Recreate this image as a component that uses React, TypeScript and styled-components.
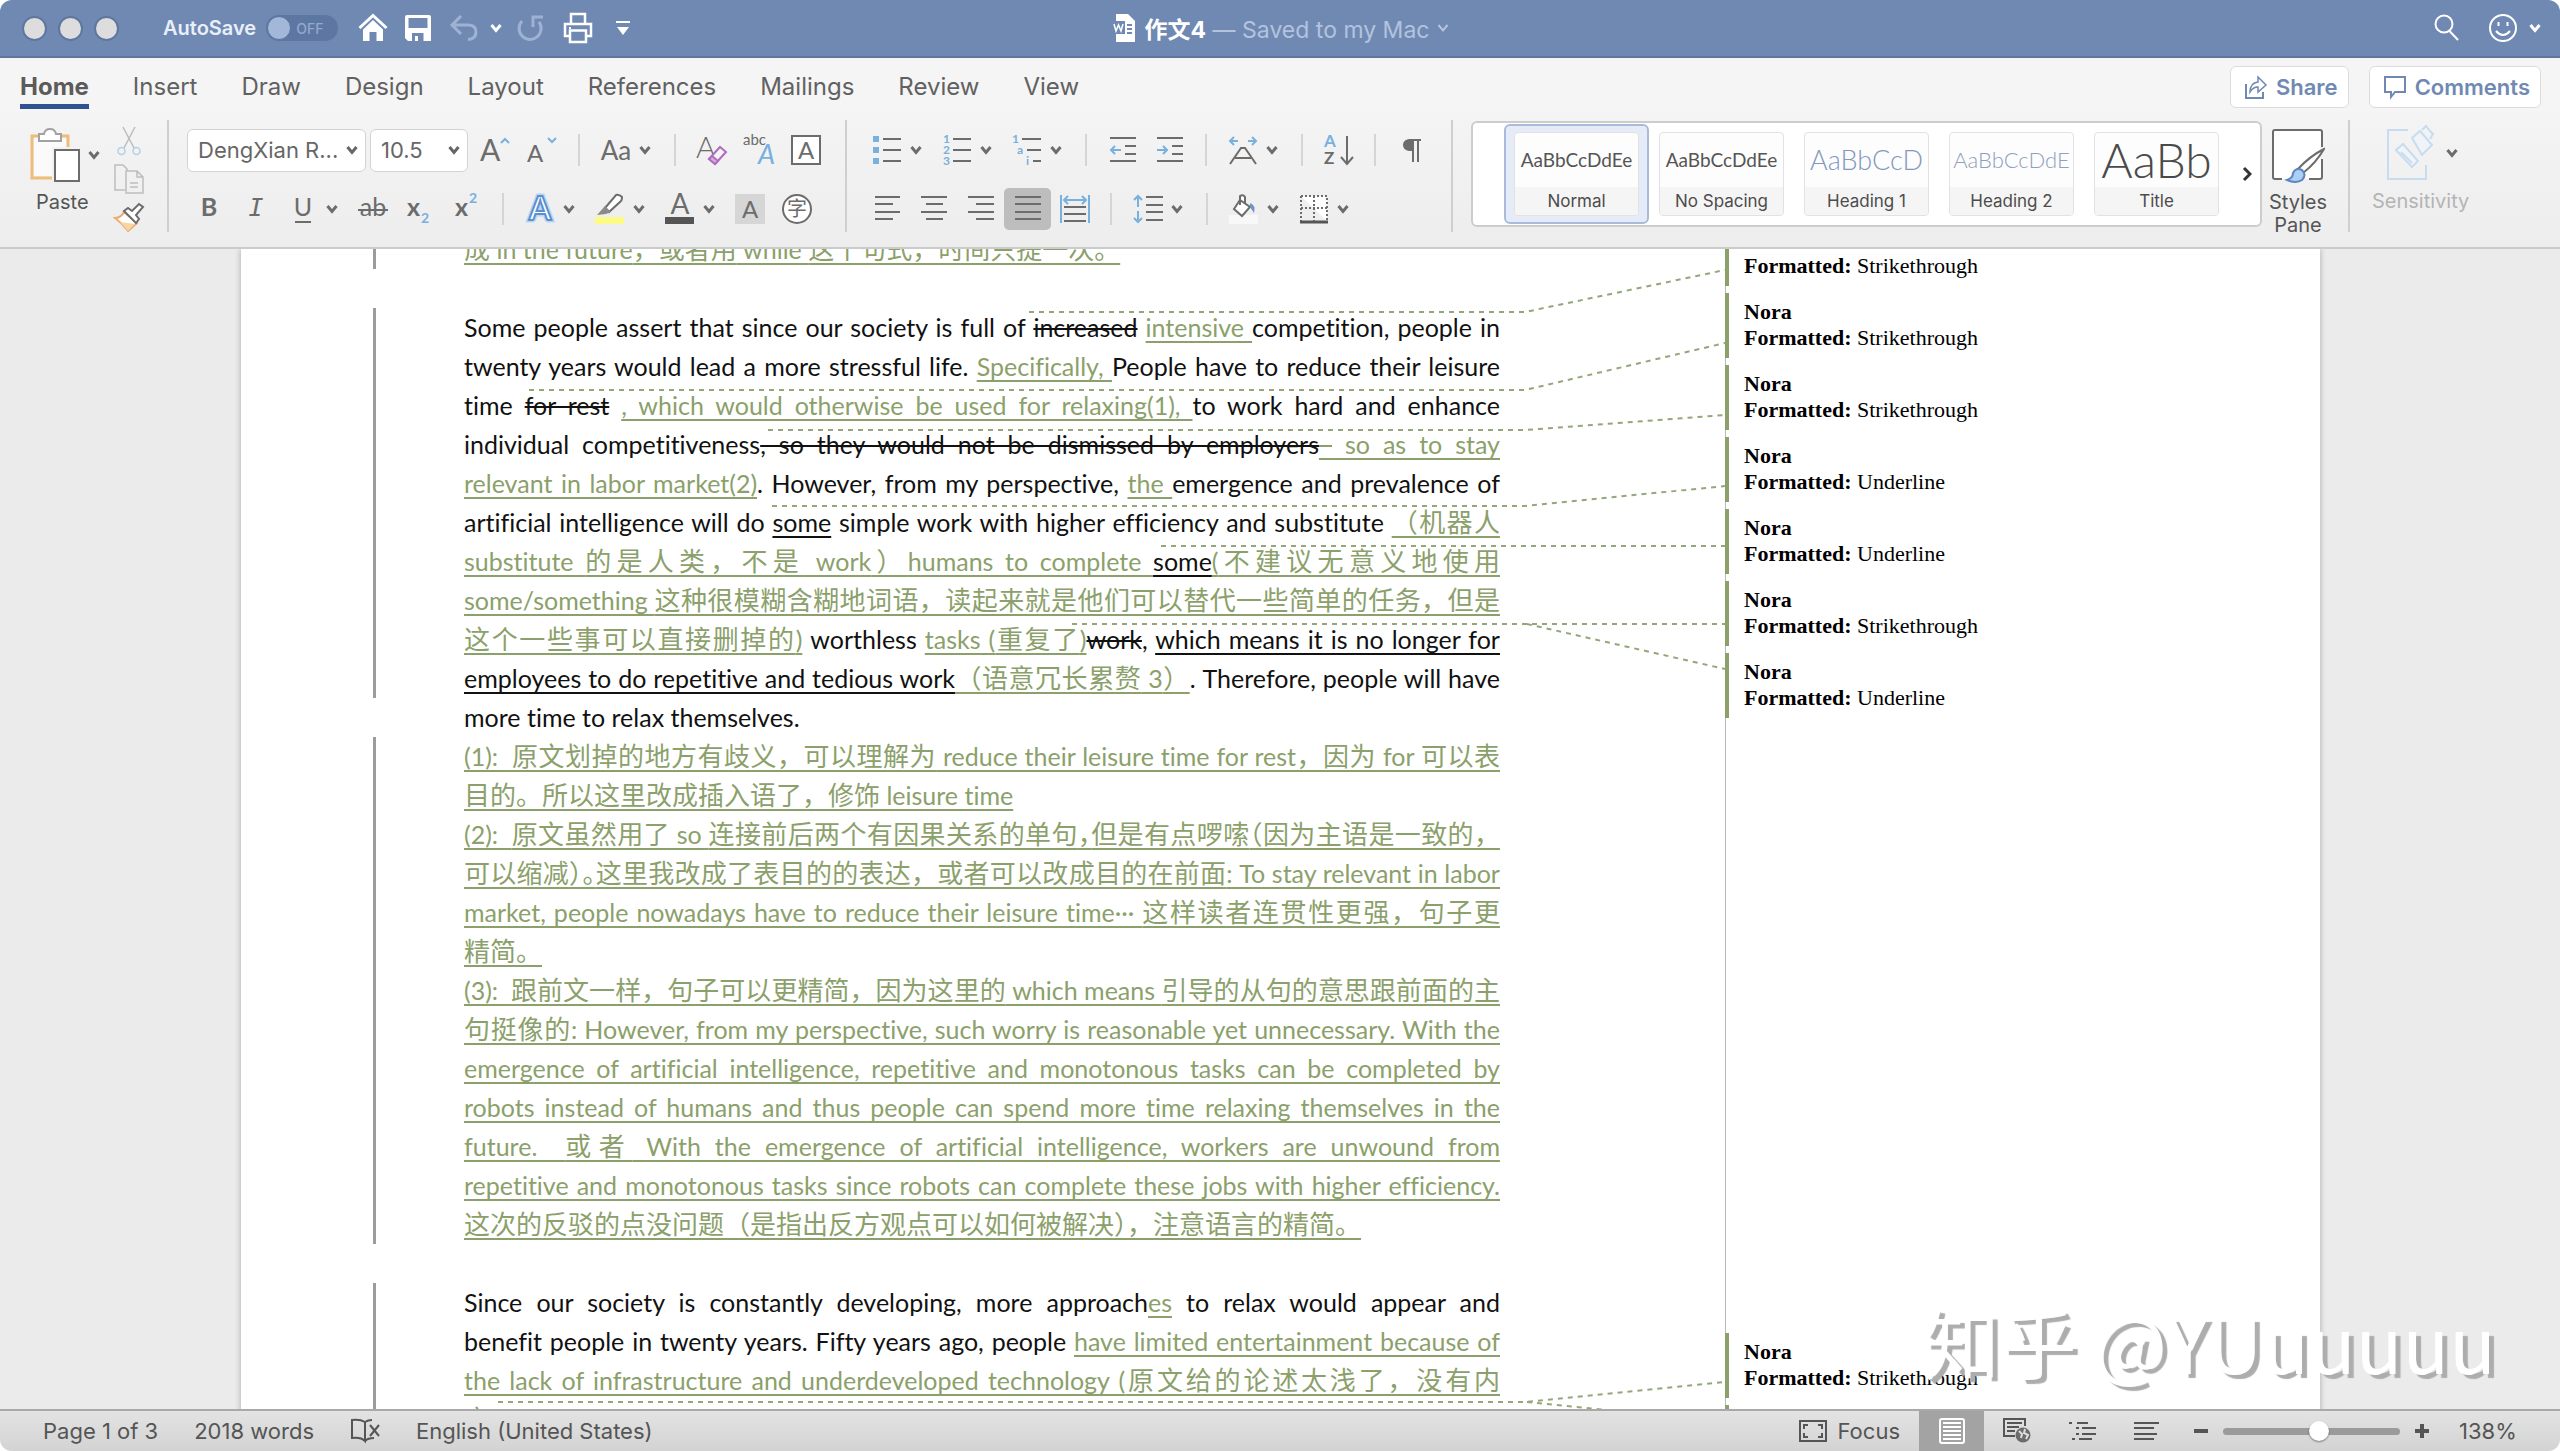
import React from "react";
import styled, { createGlobalStyle, css } from "styled-components";

const GREEN = "#8ba06a";
const INK = "#6c6c6c";
const SKY = "#78b0de";
const BLUE = "#7089b3";

const uiFont = `Inter, "Liberation Sans", "Noto Sans CJK SC", sans-serif`;
const docFont = `Lato, "Noto Sans CJK SC", sans-serif`;

const GlobalStyle = createGlobalStyle`
  *, *::before, *::after { box-sizing: border-box; }
  body { margin: 0; background: #fff; font-family: ${uiFont}; }
  button, select, input { font: inherit; color: inherit; margin: 0; }
  button { padding: 0; border: 0; background: none; cursor: pointer; }
  svg { display: block; flex: none; }
`;

/* ---------- window ---------- */

const Window = styled.div`
  display: flex;
  flex-direction: column;
  height: 100vh;
  border-radius: 12px;
  overflow: hidden;
  background: #ececec;
`;

/* ---------- title bar ---------- */

const TitleBar = styled.header`
  display: grid;
  grid-template-columns: 1fr auto 1fr;
  align-items: center;
  height: 58px;
  flex: none;
  background: ${BLUE};
  border-bottom: 2px solid #60779f;
  color: #fff;
`;

const QuickAccess = styled.div`
  display: flex;
  align-items: center;
  padding-left: 22px;
`;

const Lights = styled.div`
  display: flex;
  gap: 11px;
  margin-right: 44px;
`;

const Light = styled.button`
  width: 25px;
  height: 25px;
  border-radius: 50%;
  background: #dddddd;
  border: 2px solid #5f769e;
`;

const AutoSave = styled.label`
  display: flex;
  align-items: center;
  gap: 10px;
  font-size: 20px;
  font-weight: 600;
  color: #e9eff9;
  margin-right: 16px;
`;

const ToggleTrack = styled.span`
  position: relative;
  display: flex;
  align-items: center;
  width: 72px;
  height: 26px;
  border-radius: 13px;
  background: #5d77a3;
  font-size: 14px;
  font-weight: 500;
  color: #93a9cc;
  padding-left: 30px;
`;

const ToggleInput = styled.input`
  appearance: none;
  position: absolute;
  left: 1px;
  top: 1px;
  width: 24px;
  height: 24px;
  border-radius: 50%;
  background: #a3b7d8;
  border: 1px solid #5a719a;
`;

const BarButton = styled.button<{ $w?: number; $dim?: boolean }>`
  display: flex;
  align-items: center;
  justify-content: center;
  width: ${(p) => p.$w ?? 45}px;
  height: 40px;
  color: ${(p) => (p.$dim ? "#9fb2d3" : "#fff")};
`;

const DocTitle = styled.h1`
  display: flex;
  align-items: center;
  gap: 8px;
  margin: 0;
  font-size: 23px;
  font-weight: 400;
  color: #b3c3de;
  strong { font-weight: 700; color: #fff; }
`;

const BarRight = styled.div`
  display: flex;
  justify-content: flex-end;
  align-items: center;
  padding-right: 15px;
`;

/* ---------- tabs ---------- */

const TabRow = styled.nav`
  display: flex;
  align-items: flex-start;
  height: 54px;
  flex: none;
  padding: 8px 19px 0 20px;
  background: #f5f5f5;
`;

const Tabs = styled.div`
  display: flex;
  gap: 44px;
  flex: 1;
`;

const Tab = styled.button<{ $active?: boolean }>`
  height: 43px;
  padding-top: 4px;
  font-size: 24px;
  line-height: 34px;
  color: #616161;
  border-bottom: 5px solid transparent;
  ${(p) =>
    p.$active &&
    css`
      font-weight: 700;
      border-bottom-color: #2f5390;
      color: #5b5b5b;
    `}
`;

const PillButton = styled.button`
  display: flex;
  align-items: center;
  gap: 8px;
  height: 42px;
  padding: 0 10px 0 13px;
  margin-left: 20px;
  border: 1px solid #dcdcdc;
  border-radius: 6px;
  background: #fff;
  color: ${BLUE};
  font-size: 22px;
  font-weight: 600;
`;

/* ---------- ribbon ---------- */

const Ribbon = styled.section`
  display: flex;
  align-items: flex-start;
  height: 137px;
  flex: none;
  padding-top: 8px;
  background: linear-gradient(#f4f4f4, #ededed);
  border-bottom: 2px solid #cbcbcb;
  color: ${INK};
`;

const Group = styled.div`
  display: flex;
  height: 112px;
  padding: 9px 16px 0 16px;
  border-right: 2px solid #cfcfcf;
`;

const PasteGroup = styled(Group)`
  width: 169px;
  gap: 13px;
  align-items: flex-start;
  padding: 7px 0 0 28px;
`;

const IconWithArrow = styled.span`
  display: flex;
  align-items: center;
  gap: 8px;
  color: ${INK};
`;

const BigLabel = styled.span<{ $dim?: boolean }>`
  font-size: 20px;
  line-height: 23px;
  color: ${(p) => (p.$dim ? "#b4b4b4" : "#555")};
`;

const PasteButton = styled.button`
  display: flex;
  flex-direction: column;
  align-items: flex-start;
  gap: 8px;
  ${BigLabel} { padding-left: 8px; }
`;

const SmallStack = styled.div`
  display: flex;
  flex-direction: column;
  gap: 7px;
  margin-top: -2px;
`;

const Rows = styled.div`
  display: flex;
  flex-direction: column;
  gap: 17px;
`;

const ToolRow = styled.div<{ $combos?: boolean }>`
  display: flex;
  align-items: center;
  height: 42px;
  padding-left: ${(p) => (p.$combos ? 2 : 0)}px;
`;

const Tool = styled.button<{ $on?: boolean }>`
  display: flex;
  align-items: center;
  justify-content: center;
  width: 47px;
  height: 42px;
  color: ${INK};
  border-radius: 5px;
  background: ${(p) => (p.$on ? "#bdbdbd" : "transparent")};
`;

const MenuArrow = styled.button`
  display: flex;
  align-items: center;
  width: 23px;
  height: 42px;
  color: ${INK};
`;

const Divider = styled.span`
  width: 2px;
  height: 32px;
  margin: 0 12px;
  background: #d5d5d5;
`;

const Combo = styled.label<{ $w: number }>`
  display: flex;
  align-items: center;
  justify-content: space-between;
  width: ${(p) => p.$w}px;
  height: 43px;
  margin-right: 4px;
  padding-right: 7px;
  border: 1px solid #d3d3d3;
  border-radius: 6px;
  background: #fff;
  color: #666;
  font-size: 22px;
  select {
    appearance: none;
    flex: 1;
    min-width: 0;
    height: 36px;
    border: 0;
    background: none;
    padding: 0 0 0 10px;
  }
`;

const Gallery = styled.div`
  display: flex;
  align-items: center;
  justify-content: space-between;
  flex: 1;
  height: 106px;
  margin: 1px 0 0 18px;
  padding: 0 8px 0 31px;
  border: 2px solid #cdcdcd;
  border-radius: 6px;
  background: #fff;
`;

const StyleCards = styled.div`
  display: flex;
`;

const CardFrame = styled.button<{ $on?: boolean }>`
  padding: 6px 8px;
  border: 2px solid ${(p) => (p.$on ? "#a9bbd9" : "transparent")};
  border-radius: 6px;
  background: ${(p) => (p.$on ? "#e6ecf7" : "transparent")};
`;

const Card = styled.span`
  display: flex;
  flex-direction: column;
  width: 125px;
  height: 84px;
  border: 1px solid #e2e2e2;
  border-radius: 4px;
  background: #fdfdfd;
  overflow: hidden;
`;

const Sample = styled.span<{ $size: number; $color: string; $light?: boolean }>`
  display: flex;
  align-items: center;
  justify-content: center;
  flex: 1;
  font-family: ${docFont};
  font-weight: ${(p) => (p.$light ? 300 : 400)};
  font-size: ${(p) => p.$size}px;
  line-height: 54px;
  color: ${(p) => p.$color};
  white-space: nowrap;
`;

const CardName = styled.span`
  height: 28px;
  padding-top: 1px;
  line-height: 27px;
  background: #f5f5f5;
  color: #4c4c4c;
  font-size: 17px;
  text-align: center;
`;

const StylesPane = styled.div`
  display: flex;
  flex-direction: column;
  align-items: center;
  width: 88px;
  height: 112px;
  padding: 7px 14px 0 0;
  border-right: 2px solid #cfcfcf;
  button {
    display: flex;
    flex-direction: column;
    align-items: center;
    gap: 8px;
  }
`;

const Sensitivity = styled.div`
  width: 210px;
  padding: 5px 0 0 22px;
  display: flex;
  align-items: flex-start;
  button {
    display: flex;
    flex-direction: column;
    align-items: center;
    gap: 9px;
  }
`;

/* ---------- document ---------- */

const Canvas = styled.main`
  position: relative;
  flex: 1;
  min-height: 0;
  overflow: hidden;
  padding: 0 240px 0 241px;
  background: #ebebeb;
`;

const Page = styled.article`
  position: relative;
  display: flex;
  align-items: flex-start;
  min-height: 100%;
  background: #fff;
  box-shadow: 0 0 6px rgba(0, 0, 0, 0.28);
`;

const Body = styled.div`
  flex: 1;
  min-width: 0;
  margin-top: -19px;
  padding: 0 225px 0 132px;
  font-family: ${docFont};
  font-size: 25px;
  line-height: 39px;
  font-variant-ligatures: none;
  color: #111;
`;

const Changed = styled.section<{ $bar?: boolean }>`
  border-left: 3px solid ${(p) => (p.$bar === false ? "transparent" : "#9c9c9c")};
  padding-left: 88px;
`;

const Blank = styled.div`
  height: 39px;
`;

const Line = styled.span<{ $last?: boolean }>`
  display: block;
  height: 39px;
  white-space: nowrap;
  text-align: justify;
  text-align-last: ${(p) => (p.$last ? "left" : "justify")};
`;

const underline = css`
  text-decoration: underline;
  text-decoration-thickness: 2px;
  text-underline-offset: 4px;
  text-decoration-skip-ink: none;
`;

const Inserted = styled.ins`
  color: ${GREEN};
  ${underline}
`;

const Und = styled.u`
  ${underline}
`;

const Del = styled.s`
  text-decoration-thickness: 2px;
`;

const Han = styled.span`
  font-family: "Noto Sans CJK SC", sans-serif;
  font-size: 26px;
  line-height: 0;
`;

const Half = styled(Han)`
  font-feature-settings: "halt";
`;

/* Chinese runs are set one pixel larger than the Latin text around them. */
const setHan = (text: string) =>
  text.split(/([\u3000-\u303f\u4e00-\u9fff\uff00-\uffef]+)/).map((part, i) => (i % 2 ? <Han key={i}>{part}</Han> : part));

const Ins = ({ children }: { children: React.ReactNode }) => (
  <Inserted>
    {React.Children.map(children, (c) => (typeof c === "string" ? setHan(c) : c))}
  </Inserted>
);

/* ---------- revision balloons ---------- */

const Balloons = styled.aside`
  align-self: stretch;
  width: 595px;
  border-left: 1px solid #b9b9b9;
`;

const BalloonList = styled.ol<{ $gap?: number }>`
  list-style: none;
  margin: ${(p) => p.$gap ?? 0}px 0 0 -1px;
  padding: 0;
  display: flex;
  flex-direction: column;
  gap: 7px;
`;

const Balloon = styled.li`
  height: 65px;
  padding: 6px 0 0 15px;
  border-left: 4px solid ${GREEN};
  font-family: "Liberation Serif", serif;
  font-size: 22px;
  line-height: 26px;
  color: #000;
  b { display: block; }
  p { margin: 0; }
  p b { display: inline; }
`;

const Connectors = styled.svg`
  position: absolute;
  left: 0;
  top: 0;
  pointer-events: none;
`;

const Watermark = styled.div`
  position: absolute;
  right: 64px;
  bottom: 18px;
  font-family: "Noto Sans CJK SC", sans-serif;
  font-size: 77px;
  line-height: 100px;
  color: #fff;
  text-shadow: 5px 4px 1px #adadad;
  white-space: nowrap;
`;

/* ---------- status bar ---------- */

const StatusBar = styled.footer`
  display: flex;
  align-items: center;
  height: 42px;
  flex: none;
  padding: 0 40px 0 43px;
  background: linear-gradient(#e3e3e3, #d3d3d3);
  border-top: 2px solid #a9a9a9;
  color: #555;
  font-size: 22px;
`;

const StatusText = styled.button`
  margin-right: 36px;
`;

const Spacer = styled.div`
  flex: 1;
`;

const FocusButton = styled.button`
  display: flex;
  align-items: center;
  gap: 11px;
  margin-right: 19px;
`;

const ViewButton = styled.button<{ $on?: boolean }>`
  display: flex;
  align-items: center;
  justify-content: center;
  width: 65px;
  height: 40px;
  background: ${(p) => (p.$on ? "#a3a3a3" : "transparent")};
`;

const ZoomStep = styled.button`
  display: flex;
  align-items: center;
  justify-content: center;
  width: 44px;
  height: 40px;
`;

const ZoomSlider = styled.input`
  appearance: none;
  width: 177px;
  height: 24px;
  background: none;
  &::-webkit-slider-runnable-track {
    height: 7px;
    border-radius: 4px;
    background: #9b9b9b;
  }
  &::-webkit-slider-thumb {
    appearance: none;
    width: 20px;
    height: 20px;
    margin-top: -7px;
    border-radius: 50%;
    background: #fff;
    box-shadow: 0 1px 2px rgba(0, 0, 0, 0.45);
  }
`;

const ZoomValue = styled.output`
  width: 61px;
  margin-left: 15px;
  white-space: nowrap;
`;

/* ---------- icons ---------- */

type IcoProps = { w?: number; h?: number; sw?: number; children: React.ReactNode };
const Ico = ({ w = 32, h = 32, sw = 2, children }: IcoProps) => (
  <svg width={w} height={h} viewBox={`0 0 ${w} ${h}`} fill="none" stroke="currentColor" strokeWidth={sw} aria-hidden="true">
    {children}
  </svg>
);

const Chevron = ({ thin }: { thin?: boolean }) => (
  <Ico w={12} h={10} sw={thin ? 2 : 3}>
    <path d="M1.5 2 6 7.5 10.5 2" />
  </Ico>
);

const fontGlyph = { stroke: "none", fill: "currentColor", fontFamily: "Lato, sans-serif" };

const HomeIcon = () => (
  <Ico>
    <path d="M2.5 16 16 3.5 29.5 16" strokeWidth="3" />
    <path d="M16 8 26 17.500V29H19.500V20H12.500V29H6V17.500Z" fill="currentColor" stroke="none" />
  </Ico>
);
const SaveIcon = () => (
  <Ico>
    <path fill="currentColor" stroke="none" fillRule="evenodd" d="M5 3H27Q29 3 29 5V29H6L3 26V5Q3 3 5 3ZM6.500 6V16H25.500V6ZM10 21V29H21.500V21ZM13 24H16V29H13Z" />
  </Ico>
);
const UndoIcon = () => (
  <Ico sw={3}>
    <path d="M13 4 4 13 13 22M4 13H20Q28 13 28 20 28 27 20 27.500" />
  </Ico>
);
const RedoIcon = () => (
  <Ico sw={3}>
    <path d="M7 9A11 11 0 1 0 24 10M18 15V5H28" />
  </Ico>
);
const PrintIcon = () => (
  <Ico>
    <path d="M9 11V2H23V11M8 24H3V12H29V24H24" strokeWidth="2.500" />
    <path d="M8 18.500H24V30H8Z" strokeWidth="2.500" />
    <path d="M7 16H9" />
  </Ico>
);
const WordIcon = () => (
  <Ico w={26} h={30}>
    <path d="M5 1H17L24 8V29H5Z" fill="#fff" stroke="none" />
    <path d="M1 8H14V21H1Z" fill={BLUE} stroke="none" />
    <path d="M3 11 5 18 7.500 12 10 18 12 11" stroke="#fff" strokeWidth="1.500" />
    <path d="M16 12H21M16 16H21M16 20H21" stroke={BLUE} />
  </Ico>
);

const PasteIcon = () => (
  <Ico w={52} h={56}>
    <path d="M11 9H4V51H24M30 9H40V20" stroke="#eebd7c" strokeWidth="3" />
    <path d="M6 11H38V20H24V49H6Z" fill="#fafafa" stroke="none" />
    <path d="M11 7H16Q17 2 22 2T28 7H33V14H11Z" fill="#fff" stroke="#a2a2a2" />
    <path d="M27 23H51V54H27Z" fill="#fff" />
  </Ico>
);
const CutIcon = () => (
  <Ico sw={1.5}>
    <path d="M10 2 21 23M22 2 11 23" stroke="#bcbcbc" />
    <circle cx="8.500" cy="26" r="3.500" stroke="#b4d0e8" />
    <circle cx="23.500" cy="26" r="3.500" stroke="#b4d0e8" />
  </Ico>
);
const CopyIcon = () => (
  <Ico w={32} h={30}>
    <path d="M12 26H2V1H10L14 5V7M13 7H24L30 13V29H13ZM24 7V13H30M17 19H25M17 23H25" stroke="#bdbdbd" strokeWidth="1.500" />
  </Ico>
);
const BrushIcon = () => (
  <Ico>
    <path d="M11 11 24 22 15 30Q9 22 2 17Q8 17 11 11Z" stroke="#ecaa72" fill="#fff" />
    <path d="M7 21 22 23 15 30Z" fill="#f6d6a2" stroke="none" />
    <path d="M11 10 15 7 19 10 26 3 30 6 23 14 26 18 23 22Z" fill="#fff" />
  </Ico>
);

const GrowIcon = ({ down }: { down?: boolean }) => (
  <Ico>
    <text x="0" y={down ? 28 : 27} fontSize={down ? 24 : 30} {...fontGlyph}>A</text>
    <path d={down ? "M21 4 25 8 29 4" : "M21 9 25 5 29 9"} stroke={SKY} />
  </Ico>
);
const CaseIcon = () => (
  <Ico w={40}>
    <text x="20" y="26" textAnchor="middle" fontSize="26" {...fontGlyph}>Aa</text>
  </Ico>
);
const ClearIcon = () => (
  <Ico>
    <text x="0" y="24" fontSize="30" {...fontGlyph} fontWeight="300">A</text>
    <path d="M13 25 24 13 30 18 19 30Z" fill="#f3f3f3" stroke="#b06cc0" />
    <path d="M16 22 22 27 19 30 13 25Z" fill="#d7b0df" stroke="#b06cc0" />
  </Ico>
);
const PhoneticIcon = () => (
  <Ico w={34} h={34}>
    <text x="1" y="12" fontSize="15" {...fontGlyph}>abc</text>
    <text x="16" y="31" fontSize="27" {...fontGlyph} fontStyle="italic" fill={SKY}>A</text>
  </Ico>
);
const BoxedA = () => (
  <Ico>
    <rect x="2" y="2" width="28" height="28" fill="#fff" />
    <text x="16" y="25" textAnchor="middle" fontSize="24" {...fontGlyph}>A</text>
  </Ico>
);
const ShadeA = () => (
  <Ico>
    <rect x="1" y="1" width="30" height="30" fill="#d6d6d6" stroke="none" />
    <text x="16" y="25" textAnchor="middle" fontSize="24" {...fontGlyph}>A</text>
  </Ico>
);
const EncloseIcon = () => (
  <Ico>
    <circle cx="16" cy="16" r="14" fill="#fff" />
    <text x="16" y="23" textAnchor="middle" fontSize="20" stroke="none" fill="currentColor" fontFamily="Noto Sans CJK SC, sans-serif">字</text>
  </Ico>
);
const TextIcon = ({ t, weight = 400, italic, serif, deco }: { t: string; weight?: number; italic?: boolean; serif?: boolean; deco?: string }) => (
  <Ico>
    <text x="16" y="23" textAnchor="middle" fontSize="25" {...fontGlyph} fontFamily={serif ? "DejaVu Sans Mono, monospace" : "Lato, sans-serif"} fontWeight={weight} fontStyle={italic ? "italic" : "normal"}>{t}</text>
    {deco && <path d={deco} />}
  </Ico>
);
const ScriptIcon = ({ up }: { up?: boolean }) => (
  <Ico>
    <text x={up ? 4 : 3} y="23" fontSize="25" {...fontGlyph} fontWeight="700">x</text>
    <text x={up ? 18 : 17} y={up ? 10 : 30} fontSize="14" {...fontGlyph} fontWeight="700" fill={SKY}>2</text>
  </Ico>
);
const EffectA = () => (
  <Ico>
    <text x="16" y="27" textAnchor="middle" fontSize="32" fontFamily="Lato, sans-serif" fontWeight="700" stroke="#bcd8f3" strokeWidth="5" fill="none">A</text>
    <text x="16" y="27" textAnchor="middle" fontSize="32" fontFamily="Lato, sans-serif" fontWeight="700" stroke="#5b8fd0" strokeWidth="2" fill="#fff">A</text>
  </Ico>
);
const HighlightIcon = () => (
  <Ico>
    <path d="M1 24H30V31H1Z" fill="#fdfb86" stroke="none" />
    <path d="M11 15 22 2Q25 1 28 4 28 7 27 8L15 19Z" fill="#fff" />
    <path d="M11 13 17 19 12 21 3 22Z" fill="#8a8a8a" stroke="none" />
  </Ico>
);
const FontColorIcon = () => (
  <Ico>
    <text x="16" y="21" textAnchor="middle" fontSize="28" {...fontGlyph}>A</text>
    <path d="M1 24H30V31H1Z" fill="#555" stroke="none" />
  </Ico>
);

const BulletsIcon = () => (
  <Ico>
    <path d="M2 2H8V8H2ZM2 13H8V19H2ZM2 24H8V30H2Z" fill={SKY} stroke="none" />
    <path d="M12 5H30M12 16H30M12 27H30" />
  </Ico>
);
const digits = { stroke: "none", fill: SKY, fontFamily: "Lato, sans-serif", fontWeight: 700, fontSize: 12 };
const NumbersIcon = () => (
  <Ico>
    <text x="2" y="9" {...digits}>1</text>
    <text x="2" y="20" {...digits}>2</text>
    <text x="2" y="31" {...digits}>3</text>
    <path d="M12 5H30M12 16H30M12 27H30" />
  </Ico>
);
const MultiIcon = () => (
  <Ico>
    <text x="1" y="9" {...digits}>1</text>
    <text x="6" y="20" {...digits}>a</text>
    <text x="15" y="31" {...digits}>i</text>
    <path d="M11 5H30M16 16H30M22 27H30" />
  </Ico>
);
const IndentIcon = ({ right }: { right?: boolean }) => (
  <Ico>
    <path d="M3 4H29M18 12H29M18 20H29M3 27H29" />
    <path d={right ? "M3 16H13M9 12 13 16 9 20" : "M4 16H14M8 12 4 16 8 20"} stroke={SKY} />
  </Ico>
);
const AsianLayoutIcon = () => (
  <Ico>
    <path d="M3 30 14 14H18L29 30M8 24H24" />
    <path d="M3 7H11M7 3 3 7 7 11M29 7H21M25 3 29 7 25 11" stroke={SKY} />
  </Ico>
);
const SortIcon = () => (
  <Ico>
    <text x="1" y="13" fontSize="17" {...fontGlyph} fontWeight="700" fill={SKY}>A</text>
    <text x="1" y="30" fontSize="17" {...fontGlyph} fontWeight="700">Z</text>
    <path d="M24 2V29M18 23 24 30 30 23" />
  </Ico>
);
const PilcrowIcon = () => (
  <Ico>
    <path d="M16 6H25M17 6V28M22 6V28" />
    <path d="M17 5V17H13Q7 16 7 11T13 5Z" fill="currentColor" stroke="none" />
  </Ico>
);
const AlignIcon = ({ d }: { d: string }) => (
  <Ico>
    <path d={d} />
  </Ico>
);
const DistributeIcon = () => (
  <Ico>
    <path d="M2 2V30M30 2V30M5 7H27M9 3 5 7 9 11M23 3 27 7 23 11" stroke={SKY} />
    <path d="M5 14H27M5 21H27M5 28H27" />
  </Ico>
);
const SpacingIcon = () => (
  <Ico>
    <path d="M6 3V14M2 7 6 3 10 7M6 18V29M2 25 6 29 10 25" stroke={SKY} />
    <path d="M14 4H31M14 12H31M14 19H31M14 27H31" />
  </Ico>
);
const FillIcon = () => (
  <Ico>
    <path d="M1 22H30V31H1Z" fill="#f8f8f8" stroke="none" />
    <path d="M12 7 22 14 14 23 6 16ZM12 12V3Q15 1 17 4V10" fill="#fff" />
    <path d="M22 10Q28 12 26 20L22 14Z" fill="#6f94c8" stroke="none" />
  </Ico>
);
const BordersIcon = () => (
  <Ico>
    <path d="M3 3H29V28M3 3V28M16 3V28M3 15H29" strokeDasharray="2 2" fill="#fff" />
    <path d="M2 29H30" strokeWidth="3" stroke="#555" />
  </Ico>
);
const StylesPaneIcon = () => (
  <Ico w={54} h={56}>
    <path d="M11 52H4Q2 52 2 50V5Q2 3 4 3H49Q51 3 51 5V50Q51 52 49 52H38" fill="#fff" />
    <path d="M51 20V32" stroke="#f3f3f3" strokeWidth="4" />
    <path d="M53 22Q39 29 27 42L32 46Q45 36 53 22Z" fill="#fff" />
    <path d="M16 53Q22 51 22 46 25 40 31 43 36 48 31 53 25 57 16 53Z" fill="#acd0f4" stroke="#5d86c0" />
  </Ico>
);
const SensitivityIcon = () => (
  <Ico w={54} h={56}>
    <g stroke="#c7dcee">
      <path d="M24 5H4V54H42V40" />
      <path d="M28 13 36 6 48 20 38 30ZM38 5 42 1 46 6 49 9 46 14M12 25 19 19 34 36 28 42Z" fill="#f0f4f8" />
      <path d="M17 27 28 38" />
    </g>
  </Ico>
);

const SearchIcon = () => (
  <Ico w={30} h={30}>
    <circle cx="13" cy="11" r="8.500" />
    <path d="M18.500 18 27 27" />
  </Ico>
);
const SmileIcon = () => (
  <Ico w={32} h={32}>
    <circle cx="16" cy="16" r="13" />
    <path d="M11.500 10V14M20.500 10V14M9 19Q16 27 23 19" />
  </Ico>
);
const ShareIcon = () => (
  <Ico w={24} h={26}>
    <path d="M2 10V24H19V18" />
    <path d="M6 18Q6 9 14 8V3L22 11 14 18V13Q9 13 6 18Z" strokeWidth="1.500" />
  </Ico>
);
const CommentIcon = () => (
  <Ico w={24} h={26}>
    <path d="M2 3H22V18H12L8 23V18H2Z" />
  </Ico>
);

const ProofIcon = () => (
  <Ico w={30} h={28}>
    <path d="M15 5Q10 2 2 3V21Q11 20 15 24V5Q18 3 22 3M15 24Q18 21 24 21M20 8 29 19M29 8 20 19" />
  </Ico>
);
const FocusIcon = () => (
  <Ico w={28} h={22}>
    <rect x="1" y="1" width="26" height="20" />
    <path d="M5 9V5H9M19 5H23V9M23 13V17H19M9 17H5V13" />
  </Ico>
);
const PrintViewIcon = () => (
  <Ico w={26} h={26}>
    <rect x="1" y="1" width="24" height="24" rx="2" fill="#a3a3a3" stroke="#fff" />
    <path d="M4 5H22M4 9H22M4 13H22M4 17H22M4 21H22" stroke="#fff" />
  </Ico>
);
const WebViewIcon = () => (
  <Ico w={30} h={28}>
    <path d="M13 19H2V2H23V9M5 6H20M5 10H17M5 14H13" />
    <circle cx="21" cy="18" r="7.500" fill={INK} stroke="none" />
    <path d="M17 14 20 17 19 21M23 12 22 16 26 18 24 22" stroke="#ddd" />
  </Ico>
);
const OutlineIcon = () => (
  <Ico w={28} h={22}>
    <path d="M1 3H4M9 3H20M8 8H11M14 8H28M8 14H11M14 14H28M4 19H7M11 19H24" />
  </Ico>
);
const DraftIcon = () => (
  <Ico w={26} h={22}>
    <path d="M0 3H25M0 8H20M0 14H23M0 19H20" />
  </Ico>
);

/* ---------- content ---------- */

const tabs = ["Home", "Insert", "Draw", "Design", "Layout", "References", "Mailings", "Review", "View"];

const styleCards = [
  { name: "Normal", text: "AaBbCcDdEe", size: 19, color: "#555" },
  { name: "No Spacing", text: "AaBbCcDdEe", size: 19, color: "#555" },
  { name: "Heading 1", text: "AaBbCcD", size: 27, color: "#8398c0", light: true },
  { name: "Heading 2", text: "AaBbCcDdE", size: 22, color: "#8f9fc0", light: true },
  { name: "Title", text: "AaBb", size: 48, color: "#4a4a4a", light: true },
];

const balloons = ["Strikethrough", "Strikethrough", "Strikethrough", "Underline", "Underline", "Strikethrough", "Underline"];

const connectors = [
  "M788 63H1284L1484 21",
  "M288 141H1284L1484 94",
  "M527 181H1284L1484 166",
  "M531 257H1284L1484 237",
  "M920 297H1484",
  "M831 375H1484",
  "M1286 375 1484 420",
  "M257 1153H1284L1484 1133",
  "M1286 1153 1484 1173",
];

const BalloonItem = ({ change }: { change: string }) => (
  <Balloon>
    <b>Nora</b>
    <p>
      <b>Formatted:</b> {change}
    </p>
  </Balloon>
);

export default function App() {
  return (
    <>
      <GlobalStyle />
      <Window>
        <TitleBar>
          <QuickAccess>
            <Lights>
              <Light aria-label="Close" />
              <Light aria-label="Minimize" />
              <Light aria-label="Zoom" />
            </Lights>
            <AutoSave>
              AutoSave
              <ToggleTrack>
                <ToggleInput type="checkbox" />
                OFF
              </ToggleTrack>
            </AutoSave>
            <BarButton $w={38} aria-label="Home"><HomeIcon /></BarButton>
            <BarButton $w={52} aria-label="Save"><SaveIcon /></BarButton>
            <BarButton $w={40} $dim aria-label="Undo"><UndoIcon /></BarButton>
            <BarButton $w={24} aria-label="Undo options"><Chevron /></BarButton>
            <BarButton $w={46} $dim aria-label="Redo"><RedoIcon /></BarButton>
            <BarButton $w={48} aria-label="Print"><PrintIcon /></BarButton>
            <BarButton $w={42} aria-label="Customize toolbar">
              <Ico w={14} h={16}>
                <path d="M0 2H14" />
                <path d="M1 7H13L7 15Z" fill="currentColor" stroke="none" />
              </Ico>
            </BarButton>
          </QuickAccess>
          <DocTitle>
            <WordIcon />
            <span>
              <strong>作文4</strong> — Saved to my Mac
            </span>
            <Chevron thin />
          </DocTitle>
          <BarRight>
            <BarButton $w={70} aria-label="Search"><SearchIcon /></BarButton>
            <BarButton $w={44} aria-label="Feedback"><SmileIcon /></BarButton>
            <BarButton $w={20} aria-label="Feedback options"><Chevron /></BarButton>
          </BarRight>
        </TitleBar>

        <TabRow>
          <Tabs>
            {tabs.map((t, i) => (
              <Tab key={t} $active={i === 0}>{t}</Tab>
            ))}
          </Tabs>
          <PillButton><ShareIcon />Share</PillButton>
          <PillButton><CommentIcon />Comments</PillButton>
        </TabRow>

        <Ribbon>
          <PasteGroup>
            <PasteButton>
              <IconWithArrow><PasteIcon /><Chevron /></IconWithArrow>
              <BigLabel>Paste</BigLabel>
            </PasteButton>
            <SmallStack>
              <button aria-label="Cut"><CutIcon /></button>
              <button aria-label="Copy"><CopyIcon /></button>
              <button aria-label="Format painter"><BrushIcon /></button>
            </SmallStack>
          </PasteGroup>

          <Group>
            <Rows>
              <ToolRow $combos>
                <Combo $w={179}>
                  <select aria-label="Font" defaultValue="d"><option value="d">DengXian R...</option></select>
                  <Chevron />
                </Combo>
                <Combo $w={98}>
                  <select aria-label="Font size" defaultValue="s"><option value="s">10.5</option></select>
                  <Chevron />
                </Combo>
                <Tool aria-label="Increase font size"><GrowIcon /></Tool>
                <Tool aria-label="Decrease font size"><GrowIcon down /></Tool>
                <Divider />
                <Tool aria-label="Change case"><CaseIcon /></Tool>
                <MenuArrow aria-label="Case options"><Chevron /></MenuArrow>
                <Divider />
                <Tool aria-label="Clear formatting"><ClearIcon /></Tool>
                <Tool aria-label="Phonetic guide"><PhoneticIcon /></Tool>
                <Tool aria-label="Character border"><BoxedA /></Tool>
              </ToolRow>
              <ToolRow>
                <Tool aria-label="Bold"><TextIcon t="B" weight={700} /></Tool>
                <Tool aria-label="Italic"><TextIcon t="I" italic serif /></Tool>
                <Tool aria-label="Underline"><TextIcon t="U" deco="M8 29H24" /></Tool>
                <MenuArrow aria-label="Underline options"><Chevron /></MenuArrow>
                <Tool aria-label="Strikethrough"><TextIcon t="ab" deco="M1 17H31" /></Tool>
                <Tool aria-label="Subscript"><ScriptIcon /></Tool>
                <Tool aria-label="Superscript"><ScriptIcon up /></Tool>
                <Divider />
                <Tool aria-label="Text effects"><EffectA /></Tool>
                <MenuArrow aria-label="Effect options"><Chevron /></MenuArrow>
                <Tool aria-label="Highlight"><HighlightIcon /></Tool>
                <MenuArrow aria-label="Highlight options"><Chevron /></MenuArrow>
                <Tool aria-label="Font color"><FontColorIcon /></Tool>
                <MenuArrow aria-label="Color options"><Chevron /></MenuArrow>
                <Tool aria-label="Character shading"><ShadeA /></Tool>
                <Tool aria-label="Enclose character"><EncloseIcon /></Tool>
              </ToolRow>
            </Rows>
          </Group>

          <Group>
            <Rows>
              <ToolRow>
                <Tool aria-label="Bullets"><BulletsIcon /></Tool>
                <MenuArrow aria-label="Bullet options"><Chevron /></MenuArrow>
                <Tool aria-label="Numbering"><NumbersIcon /></Tool>
                <MenuArrow aria-label="Numbering options"><Chevron /></MenuArrow>
                <Tool aria-label="Multilevel list"><MultiIcon /></Tool>
                <MenuArrow aria-label="Multilevel options"><Chevron /></MenuArrow>
                <Divider />
                <Tool aria-label="Decrease indent"><IndentIcon /></Tool>
                <Tool aria-label="Increase indent"><IndentIcon right /></Tool>
                <Divider />
                <Tool aria-label="Asian layout"><AsianLayoutIcon /></Tool>
                <MenuArrow aria-label="Asian layout options"><Chevron /></MenuArrow>
                <Divider />
                <Tool aria-label="Sort"><SortIcon /></Tool>
                <Divider />
                <Tool aria-label="Show marks"><PilcrowIcon /></Tool>
              </ToolRow>
              <ToolRow>
                <Tool aria-label="Align left"><AlignIcon d="M4 4H29M4 11H22M4 19H29M4 26H22" /></Tool>
                <Tool aria-label="Center"><AlignIcon d="M3 4H29M8 11H25M3 19H29M8 26H25" /></Tool>
                <Tool aria-label="Align right"><AlignIcon d="M3 4H29M11 11H29M3 19H29M11 26H29" /></Tool>
                <Tool $on aria-label="Justify"><AlignIcon d="M3 4H29M3 11H29M3 19H29M3 26H29" /></Tool>
                <Tool aria-label="Distributed"><DistributeIcon /></Tool>
                <Divider />
                <Tool aria-label="Line spacing"><SpacingIcon /></Tool>
                <MenuArrow aria-label="Spacing options"><Chevron /></MenuArrow>
                <Divider />
                <Tool aria-label="Shading"><FillIcon /></Tool>
                <MenuArrow aria-label="Shading options"><Chevron /></MenuArrow>
                <Tool aria-label="Borders"><BordersIcon /></Tool>
                <MenuArrow aria-label="Border options"><Chevron /></MenuArrow>
              </ToolRow>
            </Rows>
          </Group>

          <Gallery>
            <StyleCards>
              {styleCards.map((c, i) => (
                <CardFrame key={c.name} $on={i === 0}>
                  <Card>
                    <Sample $size={c.size} $color={c.color} $light={c.light}>{c.text}</Sample>
                    <CardName>{c.name}</CardName>
                  </Card>
                </CardFrame>
              ))}
            </StyleCards>
            <button aria-label="More styles">
              <Ico w={10} h={16} sw={3}><path d="M2 2 8 8 2 14" stroke="#333" /></Ico>
            </button>
          </Gallery>

          <StylesPane>
            <button>
              <StylesPaneIcon />
              <BigLabel>Styles<br />Pane</BigLabel>
            </button>
          </StylesPane>
          <Sensitivity>
            <button>
              <IconWithArrow><SensitivityIcon /><Chevron /></IconWithArrow>
              <BigLabel $dim>Sensitivity</BigLabel>
            </button>
          </Sensitivity>
        </Ribbon>

        <Canvas>
          <Page>
            <Body>
              <Changed>
                <Line $last><Ins>成 in the future，或者用 while 这个句式，时间只提一次。</Ins></Line>
              </Changed>
              <Blank />
              <Changed>
                <Line>Some people assert that since our society is full of <Del>increased</Del> <Ins>intensive </Ins>competition, people in</Line>
                <Line>twenty years would lead a more stressful life. <Ins>Specifically, </Ins>People have to reduce their leisure</Line>
                <Line>time <Del>for rest</Del> <Ins>, which would otherwise be used for relaxing(1), </Ins>to work hard and enhance</Line>
                <Line>individual competitiveness<Del>, so they would not be dismissed by employers</Del><Ins><Del>&nbsp;</Del> so as to stay</Ins></Line>
                <Line><Ins>relevant in labor market(2)</Ins>. However, from my perspective, <Ins>the </Ins>emergence and prevalence of</Line>
                <Line>artificial intelligence will do <Und>some</Und> simple work with higher efficiency and substitute <Ins>（机器人</Ins></Line>
                <Line><Ins>substitute 的是人类，不是 work）humans to complete </Ins><Und>some</Und><Ins>(不建议无意义地使用</Ins></Line>
                <Line><Ins>some/something 这种很模糊含糊地词语，读起来就是他们可以替代一些简单的任务，但是</Ins></Line>
                <Line><Ins>这个一些事可以直接删掉的)</Ins> worthless <Ins>tasks (重复了)</Ins><Del>work</Del>, <Und>which means it is no longer for</Und></Line>
                <Line><Und>employees to do repetitive and tedious work</Und><Ins>（语意冗长累赘 3）</Ins>. Therefore, people will have</Line>
              </Changed>
              <Changed $bar={false}>
                <Line $last>more time to relax themselves.</Line>
              </Changed>
              <Changed>
                <Line><Ins>(1):&nbsp; 原文划掉的地方有歧义，可以理解为 reduce their leisure time for rest，因为 for 可以表</Ins></Line>
                <Line $last><Ins>目的。所以这里改成插入语了，修饰 leisure time</Ins></Line>
                <Line><Ins>(2):&nbsp; 原文虽然用了 so 连接前后两个有因果关系的单句<Half>，</Half>但是有点啰嗦<Half>（</Half>因为主语是一致的，</Ins></Line>
                <Line><Ins>可以缩减<Half>）。</Half>这里我改成了表目的的表达，或者可以改成目的在前面: To stay relevant in labor</Ins></Line>
                <Line><Ins>market, people nowadays have to reduce their leisure time··· 这样读者连贯性更强，句子更</Ins></Line>
                <Line $last><Ins>精简。</Ins></Line>
                <Line><Ins>(3):&nbsp; 跟前文一样，句子可以更精简，因为这里的 which means 引导的从句的意思跟前面的主</Ins></Line>
                <Line><Ins>句挺像的: However, from my perspective, such worry is reasonable yet unnecessary. With the</Ins></Line>
                <Line><Ins>emergence of artificial intelligence, repetitive and monotonous tasks can be completed by</Ins></Line>
                <Line><Ins>robots instead of humans and thus people can spend more time relaxing themselves in the</Ins></Line>
                <Line><Ins>future. &nbsp;或者 With the emergence of artificial intelligence, workers are unwound from</Ins></Line>
                <Line><Ins>repetitive and monotonous tasks since robots can complete these jobs with higher efficiency.</Ins></Line>
                <Line $last><Ins>这次的反驳的点没问题（是指出反方观点可以如何被解决<Half>）</Half>，注意语言的精简。</Ins></Line>
              </Changed>
              <Blank />
              <Changed>
                <Line>Since our society is constantly developing, more approach<Ins>es</Ins> to relax would appear and</Line>
                <Line>benefit people in twenty years. Fifty years ago, people <Ins>have limited entertainment because of</Ins></Line>
                <Line><Ins>the lack of infrastructure and underdeveloped technology (原文给的论述太浅了，没有内</Ins></Line>
                <Line $last><Ins>容</Ins></Line>
              </Changed>
            </Body>
            <Balloons>
              <BalloonList $gap={-28}>
                {balloons.map((b, i) => (
                  <BalloonItem key={i} change={b} />
                ))}
              </BalloonList>
              <BalloonList $gap={615}>
                <BalloonItem change="Strikethrough" />
                <BalloonItem change="Strikethrough" />
              </BalloonList>
            </Balloons>
            <Connectors width="1500" height="1161" viewBox="0 0 1500 1161" fill="none" stroke="#95a77a" strokeWidth="2" strokeDasharray="5 5" aria-hidden="true">
              {connectors.map((d) => (
                <path key={d} d={d} />
              ))}
            </Connectors>
          </Page>
          <Watermark>知乎 @YUuuuuu</Watermark>
        </Canvas>

        <StatusBar>
          <StatusText>Page 1 of 3</StatusText>
          <StatusText>2018 words</StatusText>
          <StatusText aria-label="Proofing"><ProofIcon /></StatusText>
          <StatusText>English (United States)</StatusText>
          <Spacer />
          <FocusButton><FocusIcon />Focus</FocusButton>
          <ViewButton $on aria-label="Print layout"><PrintViewIcon /></ViewButton>
          <ViewButton aria-label="Web layout"><WebViewIcon /></ViewButton>
          <ViewButton aria-label="Outline"><OutlineIcon /></ViewButton>
          <ViewButton aria-label="Draft"><DraftIcon /></ViewButton>
          <ZoomStep aria-label="Zoom out"><Ico w={16} h={16} sw={4}><path d="M1 8H15" /></Ico></ZoomStep>
          <ZoomSlider type="range" aria-label="Zoom" min={0} max={100} defaultValue={55} />
          <ZoomStep aria-label="Zoom in"><Ico w={16} h={16} sw={4}><path d="M1 8H15M8 1V15" /></Ico></ZoomStep>
          <ZoomValue>138%</ZoomValue>
        </StatusBar>
      </Window>
    </>
  );
}
